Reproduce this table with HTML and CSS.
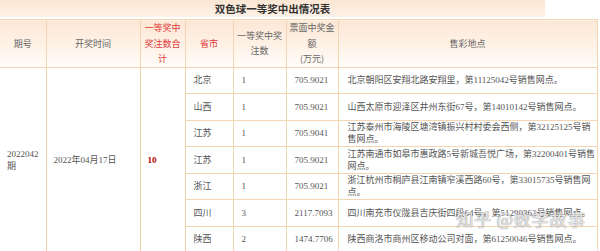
FILE: index.html
```html
<!DOCTYPE html>
<html lang="zh">
<head>
<meta charset="utf-8">
<title>双色球一等奖中出情况表</title>
<link rel="stylesheet" href="styles.css">
</head>
<body>
<div class="page">
  <div class="title">双色球一等奖中出情况表</div>
  <table class="grid">
    <colgroup>
      <col class="c1"><col class="c2"><col class="c3"><col class="c4"><col class="c5"><col class="c6"><col class="c7">
    </colgroup>
    <thead>
      <tr>
        <th>期号</th>
        <th>开奖时间</th>
        <th class="red">一等奖中<br>奖注数合<br>计</th>
        <th class="red">省市</th>
        <th>一等奖中奖<br>注数</th>
        <th>票面中奖金<br>额<br>(万元)</th>
        <th>售彩地点</th>
      </tr>
    </thead>
    <tbody>
      <tr>
        <td rowspan="7" class="first">2022042<br>期</td>
        <td rowspan="7" class="first">2022年04月17日</td>
        <td rowspan="7" class="first total">10</td>
        <td>北京</td><td>1</td><td>705.9021</td>
        <td class="addr">北京朝阳区安翔北路安翔里，第11125042号销售网点。</td>
      </tr>
      <tr><td>山西</td><td>1</td><td>705.9021</td>
        <td class="addr">山西太原市迎泽区井州东街67号，第14010142号销售网点。</td></tr>
      <tr><td>江苏</td><td>1</td><td>705.9041</td>
        <td class="addr">江苏泰州市海陵区塘湾镇振兴村村委会西侧，第32125125号销<br>售网点。</td></tr>
      <tr><td>江苏</td><td>1</td><td>705.9021</td>
        <td class="addr">江苏南通市如皋市惠政路5号新城吾悦广场，第32200401号销售<br>网点。</td></tr>
      <tr><td>浙江</td><td>1</td><td>705.9021</td>
        <td class="addr">浙江杭州市桐庐县江南镇窄溪西路60号，第33015735号销售网<br>点。</td></tr>
      <tr><td>四川</td><td>3</td><td>2117.7093</td>
        <td class="addr">四川南充市仪陇县吉庆街四段64号，第51290362号销售网点。</td></tr>
      <tr><td>陕西</td><td>2</td><td>1474.7706</td>
        <td class="addr">陕西商洛市商州区移动公司对面，第61250046号销售网点。</td></tr>
    </tbody>
  </table>
  <div class="watermark">知乎 @数学故事</div>
</div>
</body>
</html>
```
FILE: styles.css
```css
html, body {
  margin: 0;
  padding: 0;
  background: #ffffff;
}
.page {
  position: relative;
  width: 600px;
  height: 251px;
  overflow: hidden;
  font-family: "Liberation Serif", "Noto Sans CJK SC", serif;
  font-size: 9px;
  color: #555555;
}
.title {
  width: 545px;
  height: 17px;
  line-height: 17px;
  text-align: center;
  font-family: "Noto Sans CJK SC", sans-serif;
  font-weight: bold;
  font-size: 10.5px;
  color: #333333;
  background: linear-gradient(to bottom, #fbe6d3, #fdf2e8);
  margin-bottom: 2px;
}
.grid {
  width: 597px;
  border-collapse: collapse;
  table-layout: fixed;
}
.c1 { width: 46px; }
.c2 { width: 94px; }
.c3 { width: 45px; }
.c4 { width: 48px; }
.c5 { width: 53px; }
.c6 { width: 52px; }
.c7 { width: 259px; }
.grid th, .grid td {
  border: 1px solid #f3d5b3;
  padding: 0 0 0 8px;
  white-space: nowrap;
}
.grid th:first-child, .grid td.first:first-child {
  border-left: none;
}
.grid th {
  height: 45px;
  padding: 0;
  font-family: "Noto Sans CJK SC", sans-serif;
  font-weight: normal;
  line-height: 15.5px;
  text-align: center;
  color: #666666;
  background: linear-gradient(to bottom, #fce7d4, #fffcf8);
}
.grid th.red {
  color: #e0383a;
}
.grid td {
  height: 25.5px;
  line-height: 12px;
  text-align: left;
}
.grid td.first {
  vertical-align: middle;
  padding-left: 7px;
  border-color: #f0cfa6;
}
.grid td.total {
  color: #b30000;
  font-weight: bold;
}
.grid td.addr {
  padding-left: 9px;
}
.watermark {
  position: absolute;
  left: 456px;
  top: 206px;
  font-family: "Noto Sans CJK SC", sans-serif;
  font-size: 17.5px;
  letter-spacing: 0.5px;
  color: rgba(255, 255, 255, 0.75);
  text-shadow: 0 0 1px rgba(120, 120, 120, 0.8), 0 0 1px rgba(120, 120, 120, 0.6);
  white-space: nowrap;
}
```
